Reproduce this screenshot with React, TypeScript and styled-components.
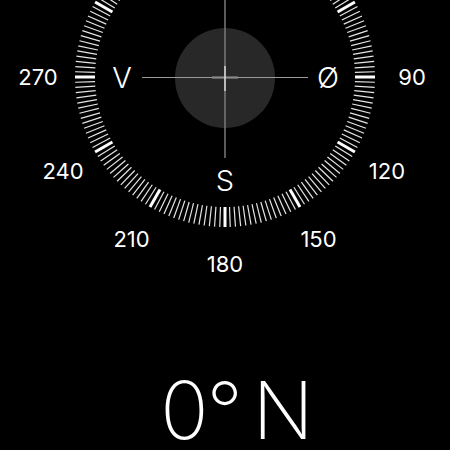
import React from "react";
import styled, { createGlobalStyle } from "styled-components";

const GlobalStyle = createGlobalStyle`
  html, body { margin: 0; padding: 0; background: #000; }
  body { font-family: Inter, "Noto Sans", "Liberation Sans", sans-serif; color: #fff; }
`;

const Screen = styled.main`
  width: 450px;
  height: 450px;
  overflow: hidden;
  display: flex;
  flex-direction: column;
  align-items: center;
  background: #000;
`;

const Dial = styled.section`
  position: relative;
  flex: none;
  width: 400px;
  height: 400px;
  margin-top: -123px;
`;

const Face = styled.svg`
  position: absolute;
  inset: 0;
  width: 400px;
  height: 400px;
`;

const Label = styled.span<{ $cardinal?: boolean }>`
  position: absolute;
  transform: translate(-50%, -50%);
  white-space: nowrap;
  line-height: 1;
  color: #fff;
  font-size: ${(p) => (p.$cardinal ? "29px" : "22px")};
  font-weight: ${(p) => (p.$cardinal ? 300 : 400)};
`;

const Heading = styled.h1`
  margin: 97px 0 0;
  padding-left: 22px;
  font-size: 80px;
  line-height: 72px;
  font-weight: 200;
  letter-spacing: -2px;
  word-spacing: -9px;
  color: #fff;
  white-space: pre;
`;

const C = 200;
const polar = (deg: number, r: number) => {
  const a = (deg * Math.PI) / 180;
  return { x: C + r * Math.sin(a), y: C - r * Math.cos(a) };
};

const ticks = Array.from({ length: 180 }, (_, i) => i * 2);
const numbers = [90, 120, 150, 180, 210, 240, 270];
const cardinals: [string, number][] = [
  ["Ø", 90],
  ["S", 180],
  ["V", 270],
];

export default function App() {
  return (
    <>
      <GlobalStyle />
      <Screen>
        <Dial>
          <Face viewBox="0 0 400 400">
            <circle cx={200} cy={201} r={50} fill="#282828" />
            {ticks.map((d) => {
              const major = d % 30 === 0;
              const a = polar(d, 130);
              const b = polar(d, 150);
              return (
                <line
                  key={d}
                  x1={a.x}
                  y1={a.y}
                  x2={b.x}
                  y2={b.y}
                  stroke={major ? "#fff" : "#e6e6e6"}
                  strokeWidth={major ? 3 : 1.2}
                />
              );
            })}
            <line x1={117} y1={200.5} x2={283} y2={200.5} stroke="#9a9a9a" strokeWidth={1} />
            <line x1={200} y1={0} x2={200} y2={281} stroke="#7a7a7a" strokeWidth={1.5} />
            <line x1={187} y1={200.5} x2={213} y2={200.5} stroke="#8a8a8a" strokeWidth={2.2} />
            <line x1={200} y1={189} x2={200} y2={214} stroke="#e8e8e8" strokeWidth={1.3} />
          </Face>
          {numbers.map((d) => {
            const p = polar(d, 187);
            return (
              <Label key={d} style={{ left: p.x, top: p.y }}>
                {d}
              </Label>
            );
          })}
          {cardinals.map(([t, d]) => {
            const p = polar(d, 103);
            return (
              <Label key={t} $cardinal style={{ left: p.x, top: p.y }}>
                {t}
              </Label>
            );
          })}
        </Dial>
        <Heading>0° N</Heading>
      </Screen>
    </>
  );
}
